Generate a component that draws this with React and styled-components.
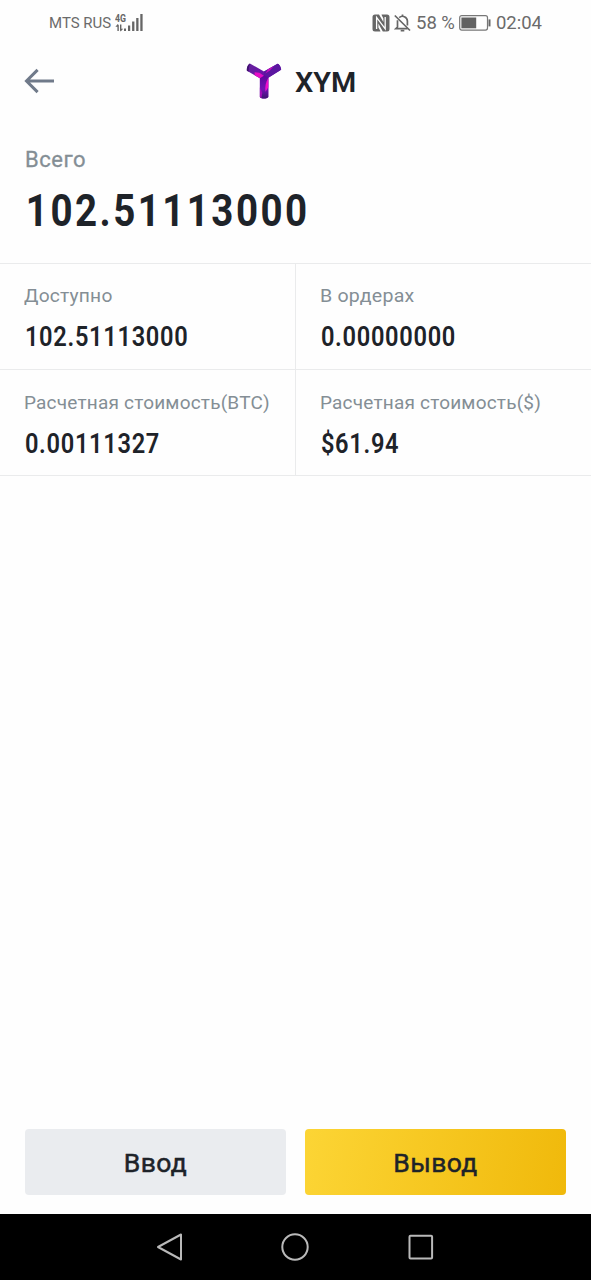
import React from 'react';
import styled, { createGlobalStyle } from 'styled-components';

const GlobalStyle = createGlobalStyle`
  * {
    box-sizing: border-box;
  }

  body {
    margin: 0;
    background: #fefefe;
    font-family: Roboto, "Liberation Sans", sans-serif;
  }
`;

const Screen = styled.div`
  display: flex;
  flex-direction: column;
  width: 100%;
  height: 1280px;
  color: #1e2329;
`;

// squeezes or widens a line of text without touching its height
const Text = styled.span`
  display: block;
  width: max-content;
  white-space: nowrap;
  transform: scaleX(${props => props.$stretch || 1});
  transform-origin: ${props => props.$origin || 'left'} center;
`;

const StatusBar = styled.div`
  display: flex;
  justify-content: space-between;
  height: 46px;
  padding: 0 49px 0 49px;
  color: #6b6b6b;
`;

const StatusGroup = styled.div`
  display: flex;
  align-items: center;
  height: 45px;
  gap: ${props => props.$gap}px;
`;

const Carrier = styled(Text)`
  font-size: 15px;
  width: 63px;
`;

const StatusText = styled(Text)`
  font-size: 18.5px;
`;

const Header = styled.header`
  display: grid;
  grid-template-columns: 1fr auto 1fr;
  align-items: center;
  height: 72px;
  padding: 0 24px 2px;
`;

const BackButton = styled.button`
  display: flex;
  padding: 0;
  border: 0;
  background: none;
`;

const Coin = styled.div`
  display: flex;
  align-items: center;
  gap: 13px;
  padding-left: 10px;
`;

const CoinName = styled(Text)`
  font-size: 28px;
  font-weight: 600;
  line-height: 34px;
  padding-top: 4px;
`;

const Total = styled.section`
  height: 145px;
  padding: 28px 25px 0;
`;

const TotalLabel = styled(Text)`
  color: #848e95;
  font-size: 22px;
  line-height: 28px;
  letter-spacing: 0.5px;
  -webkit-text-stroke: 0.3px #848e95;
`;

const TotalValue = styled(Text)`
  margin-top: 9px;
  padding-left: 1px;
  font-size: 45px;
  font-weight: 700;
  line-height: 56px;
  letter-spacing: 2.9px;
`;

const Grid = styled.section`
  display: grid;
  grid-template-columns: 296px 1fr;
  grid-auto-rows: 106px;
  border-bottom: 1px solid #eaebec;
`;

const Cell = styled.div`
  padding: ${props => (props.$lower ? 21 : 20)}px 0 0 24px;
  border-top: 1px solid #eaebec;
  border-right: ${props => (props.$divider ? '1px solid #eaebec' : '0')};
`;

const CellLabel = styled(Text)`
  color: #848e95;
  font-size: 19px;
  line-height: 24px;
  letter-spacing: 0.2px;
`;

const CellValue = styled(Text)`
  margin-top: 13px;
  padding-left: 1px;
  font-size: 27px;
  font-weight: 600;
  line-height: 32px;
  letter-spacing: 0.8px;
`;

const Actions = styled.div`
  display: grid;
  grid-template-columns: 1fr 1fr;
  gap: 19px;
  margin-top: auto;
  padding: 0 25px 19px;
`;

const Button = styled.button`
  display: flex;
  align-items: center;
  justify-content: center;
  height: 66px;
  padding: 1px 0 0;
  border: 0;
  border-radius: 4px;
  color: #1e2329;
  background: ${props => (props.$primary ? 'linear-gradient(100deg, #fcd535, #f0b90b)' : '#eaecef')};
  font-family: inherit;
  font-size: 26.5px;
  letter-spacing: 0.4px;
  -webkit-text-stroke: 0.5px #1e2329;
`;

const NavBar = styled.nav`
  display: flex;
  align-items: center;
  justify-content: center;
  gap: 97.5px;
  height: 66px;
  padding-right: 1px;
  background: #000;
`;

const SignalIcon = () => (
  <svg width="30" height="20" viewBox="0 0 30 20" fill="#666">
    <text x="0" y="8.6" fontSize="10" fontWeight="700" textLength="11" lengthAdjust="spacingAndGlyphs">4G</text>
    <path d="M.4 13.8L2.8 11l1 1.2V18H2.4v-4.2zM5 11.5h1.4v4.2h1.8L5.7 18.4 5 17.6z" />
    <rect x="9" y="15.5" width="2" height="2.5" />
    <rect x="13" y="12.5" width="2.2" height="5.5" />
    <rect x="17.1" y="8.5" width="2.3" height="9.5" />
    <rect x="21.2" y="5" width="2.3" height="13" />
    <rect x="25.3" y="1" width="2.3" height="17" />
  </svg>
);

const NfcIcon = () => (
  <svg width="18" height="18" viewBox="0 0 18 18">
    <path d="M3 .5h4l4.4 7.6V4.4L9.6.9V.5H15A2.5 2.5 0 0 1 17.5 3v12a2.5 2.5 0 0 1-2.5 2.5h-4.2L6.4 9.6v4l2 3.5v.4H3A2.5 2.5 0 0 1 .5 15V3A2.5 2.5 0 0 1 3 .5z" fill="#666" />
    <path d="M4.6 15V3.4l8.6 11.4V3" stroke="#fefefe" strokeWidth="1.3" fill="none" />
  </svg>
);

const BellOffIcon = () => (
  <svg width="17" height="18" viewBox="0 0 17 18" fill="none" stroke="#666" strokeWidth="1.7">
    <path d="M5.2 3.6A4.9 4.9 0 0 1 13.4 7v4.6M3.5 6.3V13L1.8 14.6h11.8" />
    <path d="M8.5 2.3V.6M6.7 16.7h3.6M.8 1.5l15.2 15" />
  </svg>
);

const BatteryIcon = () => (
  <svg width="32" height="16" viewBox="0 0 32 16">
    <rect x=".7" y=".7" width="27.8" height="14.4" rx="2" fill="none" stroke="#777" strokeWidth="1.2" />
    <rect x="2.4" y="2.5" width="14.8" height="10.8" fill="#626262" />
    <rect x="29.5" y="4.4" width="2" height="7" fill="#666" />
  </svg>
);

const BackIcon = () => (
  <svg width="30" height="26" viewBox="0 0 30 26" fill="none" stroke="#707a8a" strokeWidth="3">
    <path d="M2.2 13H30M13.6 1.9L2.5 13l11.1 11.1" />
  </svg>
);

const SymbolLogo = () => (
  <svg width="36" height="36" viewBox="0 0 36 36">
    <defs>
      <linearGradient id="arm" x1="0" y1="0" x2="1" y2="1">
        <stop offset="0" stopColor="#65219b" />
        <stop offset=".55" stopColor="#6a0fae" />
        <stop offset="1" stopColor="#ad0cc6" />
      </linearGradient>
      <linearGradient id="stem" x1="0" y1="0" x2="0" y2="1">
        <stop offset="0" stopColor="#5d079b" />
        <stop offset=".6" stopColor="#7313b4" />
        <stop offset="1" stopColor="#3c1470" />
      </linearGradient>
    </defs>
    <path d="M3.9.5L18 8.6 31.6.8c1.8.6 3.6 3.7 3.5 6L22.3 14.7V34c-1.8 2.1-6.8 2.1-8.4 0V15.3L.9 7.8C.5 5 1.8 1.5 3.9.5z" fill="url(#arm)" />
    <path d="M18 8.6L31.6.8c1.8.6 3.6 3.7 3.5 6L22.3 14.7l-4.3-1.9z" fill="#5b16a0" />
    <path d="M13.9 15.3l4.1-3.2 4.3 2.6V34c-1.8 2.1-6.8 2.1-8.4 0z" fill="url(#stem)" />
    <path d="M8.6 9.2l4.8.5 4.5 3.1-4 2.5-5.2-3z" fill="#e50cc5" />
    <path d="M22.3 14.7v9.6l-2.8 4.4c-.8-4.4.2-9.7 2.8-14z" fill="#f00dcb" />
    <path d="M22.1 6.3l5.8-3.4-4 4.7-4.5 2.8z" fill="#c70cbf" />
    <path d="M13.9 24.5l2.4 5.3-.9 5.2-1.5-1z" fill="#a20bb7" />
    <path d="M.9 7.8C.5 5 1.8 1.5 3.9.5c-.6 2.6-1.4 4.7-1.2 8.3z" fill="#40106f" />
  </svg>
);

const cells = [
  { label: 'Доступно', value: '102.51113000', stretch: 1.01 },
  { label: 'В ордерах', value: '0.00000000', stretch: 1.03 },
  { label: 'Расчетная стоимость(BTC)', value: '0.00111327', stretch: 1 },
  { label: 'Расчетная стоимость($)', value: '$61.94', stretch: 1 },
];

export default function App() {
  return (
    <Screen>
      <GlobalStyle />
      <StatusBar>
        <StatusGroup $gap={3}>
          <Carrier>MTS RUS</Carrier>
          <SignalIcon />
        </StatusGroup>
        <StatusGroup $gap={4.5}>
          <NfcIcon />
          <BellOffIcon />
          <StatusText>58 %</StatusText>
          <BatteryIcon />
          <StatusText>02:04</StatusText>
        </StatusGroup>
      </StatusBar>
      <Header>
        <BackButton aria-label="Назад"><BackIcon /></BackButton>
        <Coin>
          <SymbolLogo />
          <CoinName $stretch={1.03}>XYM</CoinName>
        </Coin>
      </Header>
      <Total>
        <TotalLabel>Всего</TotalLabel>
        <TotalValue $stretch={0.855}>102.51113000</TotalValue>
      </Total>
      <Grid>
        {cells.map((cell, i) => (
          <Cell key={cell.label} $divider={i % 2 === 0} $lower={i > 1}>
            <CellLabel $stretch={cell.stretch}>{cell.label}</CellLabel>
            <CellValue $stretch={0.875}>{cell.value}</CellValue>
          </Cell>
        ))}
      </Grid>
      <Actions>
        <Button><Text $origin="center">Ввод</Text></Button>
        <Button $primary><Text $origin="center">Вывод</Text></Button>
      </Actions>
      <NavBar>
        <svg width="28" height="28" viewBox="0 0 28 28" fill="none" stroke="#b9b9b9" strokeWidth="2" strokeLinejoin="round">
          <path d="M25 1.5v25L2 14z" />
        </svg>
        <svg width="28" height="28" viewBox="0 0 28 28" fill="none" stroke="#b9b9b9" strokeWidth="2">
          <circle cx="14" cy="14" r="12.7" />
        </svg>
        <svg width="28" height="28" viewBox="0 0 28 28" fill="none" stroke="#b9b9b9" strokeWidth="2">
          <rect x="2.5" y="2.8" width="22.6" height="22.6" rx="1" />
        </svg>
      </NavBar>
    </Screen>
  );
}
